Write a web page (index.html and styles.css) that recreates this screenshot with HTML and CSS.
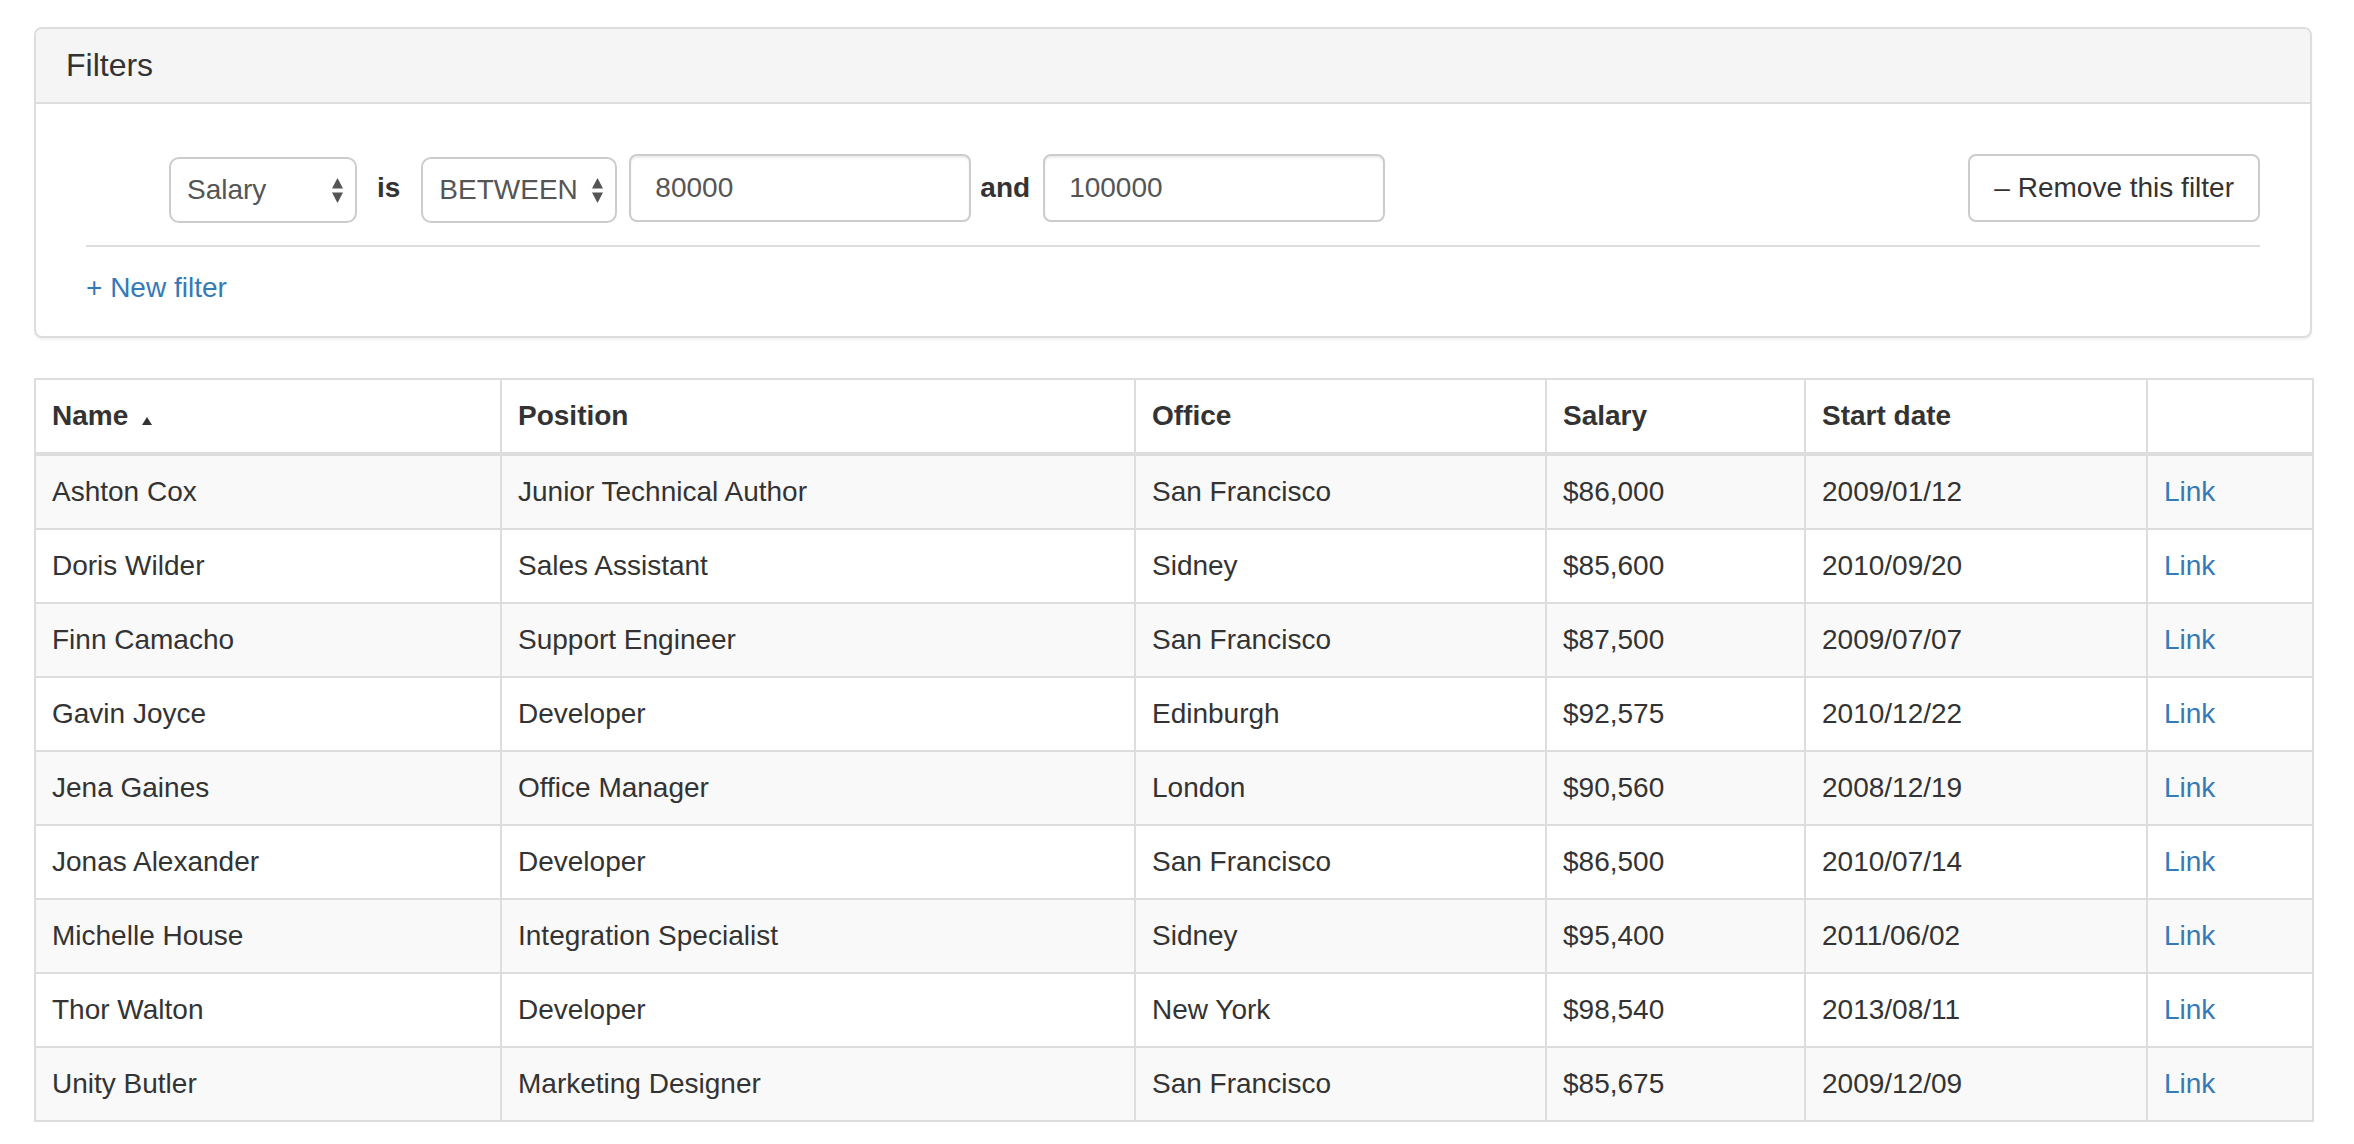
FILE: index.html
```html
<!DOCTYPE html>
<html lang="en">
<head>
<meta charset="utf-8">
<title>Filters</title>
<link rel="stylesheet" href="styles.css">
</head>
<body>
<div class="page">
  <div class="panel">
    <div class="panel-heading">
      <h3 class="panel-title">Filters</h3>
    </div>
    <div class="panel-body">
      <div class="filter-list">
        <div class="filter-row">
          <div class="select select-field">
            <span>Salary</span>
            <svg class="arrows" width="11" height="25" viewBox="0 0 11 25"><path d="M0 10.5 L5.5 0 L11 10.5 Z"/><path d="M0 14.5 L11 14.5 L5.5 25 Z"/></svg>
          </div>
          <span class="op-label op-is">is</span>
          <div class="select select-op">
            <span>BETWEEN</span>
            <svg class="arrows" width="11" height="25" viewBox="0 0 11 25"><path d="M0 10.5 L5.5 0 L11 10.5 Z"/><path d="M0 14.5 L11 14.5 L5.5 25 Z"/></svg>
          </div>
          <input class="input input-first" type="text" value="80000">
          <span class="op-label op-and">and</span>
          <input class="input" type="text" value="100000">
          <button class="btn-remove" type="button">&ndash; Remove this filter</button>
        </div>
      </div>
      <a class="new-filter" href="#">+ New filter</a>
    </div>
  </div>

  <table class="data-table">
    <colgroup>
      <col class="c-name">
      <col class="c-pos">
      <col class="c-office">
      <col class="c-salary">
      <col class="c-date">
      <col class="c-link">
    </colgroup>
    <thead>
      <tr>
        <th>Name<svg class="sort" width="10" height="8" viewBox="0 0 10 8"><path d="M0 8 L5 0 L10 8 Z"/></svg></th>
        <th>Position</th>
        <th>Office</th>
        <th>Salary</th>
        <th>Start date</th>
        <th></th>
      </tr>
    </thead>
    <tbody>
      <tr><td>Ashton Cox</td><td>Junior Technical Author</td><td>San Francisco</td><td>$86,000</td><td>2009/01/12</td><td><a href="#">Link</a></td></tr>
      <tr><td>Doris Wilder</td><td>Sales Assistant</td><td>Sidney</td><td>$85,600</td><td>2010/09/20</td><td><a href="#">Link</a></td></tr>
      <tr><td>Finn Camacho</td><td>Support Engineer</td><td>San Francisco</td><td>$87,500</td><td>2009/07/07</td><td><a href="#">Link</a></td></tr>
      <tr><td>Gavin Joyce</td><td>Developer</td><td>Edinburgh</td><td>$92,575</td><td>2010/12/22</td><td><a href="#">Link</a></td></tr>
      <tr><td>Jena Gaines</td><td>Office Manager</td><td>London</td><td>$90,560</td><td>2008/12/19</td><td><a href="#">Link</a></td></tr>
      <tr><td>Jonas Alexander</td><td>Developer</td><td>San Francisco</td><td>$86,500</td><td>2010/07/14</td><td><a href="#">Link</a></td></tr>
      <tr><td>Michelle House</td><td>Integration Specialist</td><td>Sidney</td><td>$95,400</td><td>2011/06/02</td><td><a href="#">Link</a></td></tr>
      <tr><td>Thor Walton</td><td>Developer</td><td>New York</td><td>$98,540</td><td>2013/08/11</td><td><a href="#">Link</a></td></tr>
      <tr><td>Unity Butler</td><td>Marketing Designer</td><td>San Francisco</td><td>$85,675</td><td>2009/12/09</td><td><a href="#">Link</a></td></tr>
    </tbody>
  </table>
</div>
</body>
</html>
```

FILE: styles.css
```css
* { box-sizing: border-box; }

html, body {
  margin: 0;
  padding: 0;
  background: #fff;
}

body {
  font-family: "Liberation Sans", Arial, Helvetica, sans-serif;
  font-size: 28px;
  line-height: 40px;
  color: #333;
}

.page {
  padding: 27px 42px 0 34px;
}

/* Panel */
.panel {
  border: 2px solid #ddd;
  border-radius: 8px;
  margin-bottom: 40px;
  box-shadow: 0 2px 2px rgba(0, 0, 0, 0.05);
  background: #fff;
}

.panel-heading {
  background: #f5f5f5;
  border-bottom: 2px solid #ddd;
  border-radius: 6px 6px 0 0;
  padding: 20px 30px;
}

.panel-title {
  margin: 0;
  font-size: 32px;
  line-height: 33px;
  font-weight: normal;
  color: #333;
}

.panel-body {
  padding: 30px 50px 28px;
}

.filter-list {
  padding: 20px 0 22px;
  border-bottom: 2px solid #ddd;
}

.filter-row {
  display: flex;
  align-items: flex-start;
}

.select {
  height: 66px;
  margin-top: 3px;
  border: 2px solid #ccc;
  border-radius: 10px;
  background: #fff;
  padding: 0 12px 0 16px;
  display: flex;
  align-items: center;
  justify-content: space-between;
  color: #555;
  font-size: 28px;
}

.select-field {
  width: 188px;
  margin-left: 83px;
}

.select-op {
  width: 196px;
}

.arrows {
  display: block;
  fill: #555;
  flex: none;
}

.op-label {
  font-weight: bold;
  line-height: 68px;
  color: #333;
}

.op-is {
  margin: 0 21px 0 20px;
}

.op-and {
  margin: 0 13px 0 9px;
}

.input {
  width: 342px;
  height: 68px;
  border: 2px solid #ccc;
  border-radius: 8px;
  padding: 0 24px;
  font-family: inherit;
  font-size: 28px;
  color: #555;
  background: #fff;
  box-shadow: inset 0 2px 2px rgba(0, 0, 0, 0.075);
  outline: none;
}

.input-first {
  margin-left: 12px;
}

.btn-remove {
  margin-left: auto;
  height: 68px;
  padding: 0 24px;
  border: 2px solid #ccc;
  border-radius: 8px;
  background: #fff;
  font-family: inherit;
  font-size: 28px;
  color: #333;
  cursor: pointer;
}

.new-filter {
  display: block;
  margin-top: 21px;
  line-height: 40px;
  color: #337ab7;
  text-decoration: none;
}

/* Table */
.data-table {
  width: 100%;
  border-collapse: collapse;
  table-layout: fixed;
  border: 2px solid #ddd;
}

.c-name { width: 466px; }
.c-pos { width: 634px; }
.c-office { width: 411px; }
.c-salary { width: 259px; }
.c-date { width: 342px; }
.c-link { width: 166px; }

.data-table th,
.data-table td {
  border: 2px solid #ddd;
  padding: 16px;
  line-height: 40px;
  text-align: left;
  vertical-align: top;
  white-space: nowrap;
}

.data-table thead th {
  border-bottom-width: 4px;
  font-weight: bold;
}

.data-table tbody tr:nth-child(odd) td {
  background: #f9f9f9;
}

.data-table a {
  color: #337ab7;
  text-decoration: none;
}

.sort {
  margin-left: 14px;
  fill: #333;
  vertical-align: baseline;
}
```
